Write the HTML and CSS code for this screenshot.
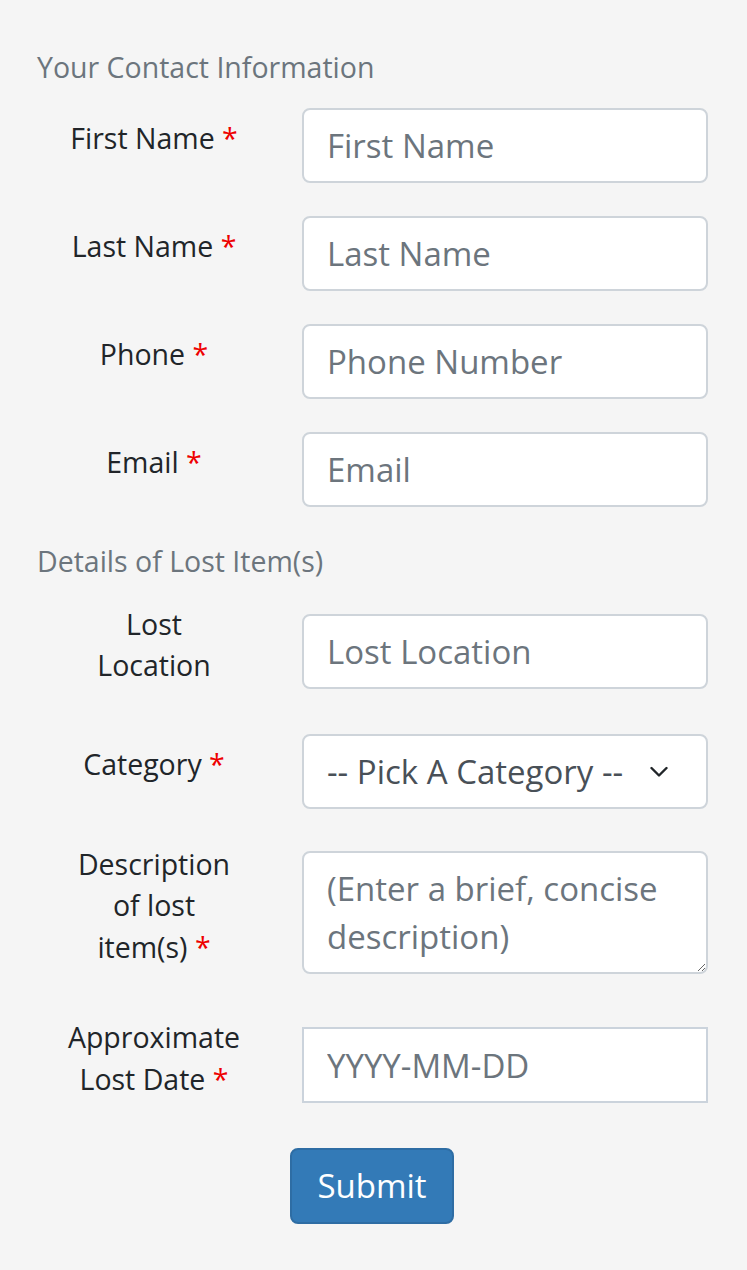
FILE: index.html
```html
<!DOCTYPE html>
<html lang="en">
<head>
<meta charset="utf-8">
<title>Lost Item Report</title>
<link rel="stylesheet" href="styles.css">
</head>
<body>
<main class="page">
  <form class="lost-form">
    <h2 class="section-title">Your Contact Information</h2>

    <div class="field">
      <label class="field-label" for="first-name">First Name <span class="req">*</span></label>
      <div class="field-control"><input class="input" id="first-name" type="text" placeholder="First Name"></div>
    </div>

    <div class="field">
      <label class="field-label" for="last-name">Last Name <span class="req">*</span></label>
      <div class="field-control"><input class="input" id="last-name" type="text" placeholder="Last Name"></div>
    </div>

    <div class="field">
      <label class="field-label" for="phone">Phone <span class="req">*</span></label>
      <div class="field-control"><input class="input" id="phone" type="text" placeholder="Phone Number"></div>
    </div>

    <div class="field">
      <label class="field-label" for="email">Email <span class="req">*</span></label>
      <div class="field-control"><input class="input" id="email" type="text" placeholder="Email"></div>
    </div>

    <h2 class="section-title">Details of Lost Item(s)</h2>

    <div class="field">
      <label class="field-label" for="location">Lost Location</label>
      <div class="field-control"><input class="input" id="location" type="text" placeholder="Lost Location"></div>
    </div>

    <div class="field">
      <label class="field-label" for="category">Category <span class="req">*</span></label>
      <div class="field-control select-wrap">
        <select class="input select" id="category">
          <option>-- Pick A Category --</option>
        </select>
        <svg class="chevron" width="18" height="11" viewBox="0 0 18 11" aria-hidden="true"><path d="M1.5 1.5 L9 9 L16.5 1.5" fill="none" stroke="#212529" stroke-width="2.4" stroke-linecap="round" stroke-linejoin="round"/></svg>
      </div>
    </div>

    <div class="field">
      <label class="field-label" for="description">Description of lost item(s) <span class="req">*</span></label>
      <div class="field-control"><textarea class="input textarea" id="description" rows="2" placeholder="(Enter a brief, concise description)"></textarea></div>
    </div>

    <div class="field">
      <label class="field-label" for="lost-date">Approximate Lost Date <span class="req">*</span></label>
      <div class="field-control"><input class="input date" id="lost-date" type="text" placeholder="YYYY-MM-DD"></div>
    </div>

    <div class="actions">
      <button class="btn-submit" type="submit">Submit</button>
    </div>
  </form>
</main>
</body>
</html>
```

FILE: styles.css
```css
html, body {
  margin: 0;
  padding: 0;
  background: #f5f5f5;
}

body {
  font-family: "Open Sans", "Noto Sans", sans-serif;
  color: #212529;
}

.page {
  padding: 46px 39px 48px 36px;
}

.lost-form {
  display: flex;
  flex-direction: column;
}

.section-title {
  margin: 0 0 20px 0;
  font-size: 28.5px;
  font-weight: 400;
  line-height: 42px;
  color: #6c757d;
  padding-left: 1px;
}

.field {
  display: flex;
  align-items: center;
  gap: 30px;
  margin-bottom: 33px;
}

.field-label {
  flex: 0 0 236px;
  box-sizing: border-box;
  padding: 1.5px 30px 14.5px;
  text-align: center;
  font-size: 28.5px;
  line-height: 41.5px;
  color: #212529;
}

.req {
  color: #ee0000;
}

.field-control {
  flex: 1;
  min-width: 0;
}

.input {
  display: block;
  width: 100%;
  height: 75px;
  box-sizing: border-box;
  margin: 0;
  padding: 11px 23px;
  font-family: inherit;
  font-size: 33px;
  line-height: 48px;
  color: #495057;
  background: #fff;
  border: 2px solid #ced4da;
  border-radius: 8px;
  outline: none;
}

.input::placeholder {
  color: #6c757d;
  opacity: 1;
}

.select-wrap {
  position: relative;
}

.select {
  appearance: none;
  -webkit-appearance: none;
  padding-right: 60px;
  color: #495057;
}

.chevron {
  position: absolute;
  right: 40px;
  top: 50%;
  transform: translateY(-50%);
  pointer-events: none;
}

.textarea {
  height: 123px;
  padding-top: 12px;
  resize: vertical;
  overflow: hidden;
}

.date {
  border-radius: 0;
  border-color: #cbd3dc;
  height: 76px;
}

.actions {
  display: flex;
  justify-content: center;
}

.btn-submit {
  font-family: inherit;
  font-size: 33px;
  line-height: 48px;
  color: #fff;
  background: #337ab7;
  border: 2px solid #2e6da4;
  border-radius: 8px;
  padding: 12px 25px;
  cursor: pointer;
}
```
